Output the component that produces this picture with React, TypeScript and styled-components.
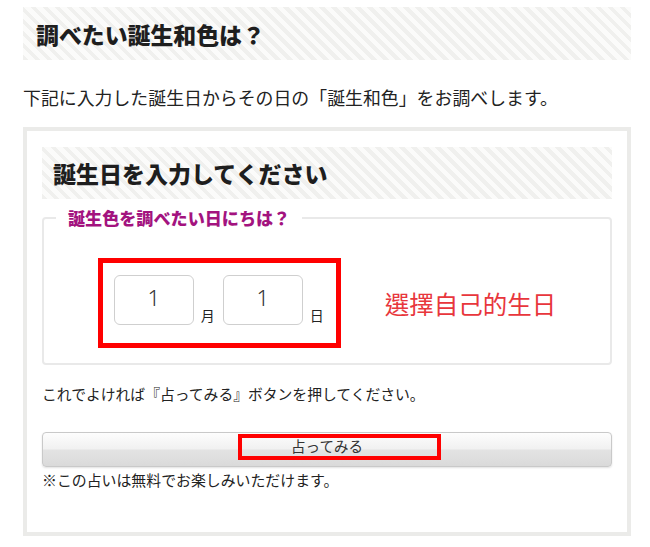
import React from "react";
import styled, { createGlobalStyle } from "styled-components";

const GlobalStyle = createGlobalStyle`
  body {
    margin: 0;
    background: #fff;
    font-family: "Noto Sans CJK JP", "Noto Sans", sans-serif;
    color: #222;
  }
`;

const stripes = `repeating-linear-gradient(45deg, #f0f0ee 0 4px, #fbfbfa 4px 8.5px)`;

const Page = styled.div`
  width: 608px;
  padding: 7px 0 0 23px;
`;

const Title = styled.h2`
  margin: 0;
  height: 53px;
  display: flex;
  align-items: center;
  padding-left: 13px;
  background: ${stripes};
  font-size: 22.9px;
  font-weight: 900;
  color: #1e1e1e;
`;

const Lead = styled.p`
  margin: 24px 0 17px;
  font-size: 17.9px;
  line-height: 26px;
  color: #222;
`;

const Box = styled.div`
  border: 4px solid #ebebe9;
  padding: 16px 15px 41px;
`;

const SubTitle = styled.h3`
  margin: 0;
  height: 52px;
  display: flex;
  align-items: center;
  padding-left: 11px;
  background: ${stripes};
  font-size: 23px;
  font-weight: 900;
  color: #1e1e1e;
`;

const Field = styled.fieldset`
  margin: 9px 0 0;
  border: 2px solid #e9e9e9;
  border-radius: 4px;
  padding: 30px 12px 15px;
  min-width: 0;
`;

const Legend = styled.legend`
  padding: 0 12px;
  font-size: 17.1px;
  line-height: 20px;
  font-weight: 800;
  color: #a3137f;
`;

const Row = styled.div`
  display: flex;
  align-items: center;
  justify-content: center;
  gap: 44px;
`;

const Marked = styled.div`
  display: flex;
  align-items: flex-end;
  border: 5px solid #f00;
  padding: 12px 12px 18px 11px;
`;

const DateInput = styled.input`
  box-sizing: border-box;
  width: 80px;
  height: 50px;
  border: 1px solid #cfcfcf;
  border-radius: 6px;
  background: #fff;
  text-align: center;
  font-family: "Noto Sans", sans-serif;
  font-size: 22px;
  font-weight: 300;
  color: #333;
  padding: 0 0 6px;
  outline: none;
`;

const Unit = styled.span<{ $last?: boolean }>`
  font-size: 14px;
  line-height: 18px;
  color: #222;
  margin: 0 ${(p) => (p.$last ? "0" : "8px")} 1px 7px;
`;

const Hint = styled.span`
  font-family: "Noto Sans CJK TC", sans-serif;
  font-size: 24.5px;
  font-weight: 400;
  color: #e8363c;
`;

const Note = styled.p<{ $top: number }>`
  margin: ${(p) => p.$top}px 0 0;
  font-size: ${(p) => (p.$top > 10 ? "14.8px" : "14.9px")};
  line-height: 22px;
  color: #222;
`;

const ButtonWrap = styled.div`
  position: relative;
  margin-top: 27px;
`;

const FortuneButton = styled.button`
  display: block;
  width: 100%;
  height: 35px;
  border: 1px solid #c9c9c9;
  border-radius: 4px;
  background: linear-gradient(#fdfdfd 0%, #f1f1f1 48%, #e3e3e3 52%, #dadada 100%);
  box-shadow: 0 1px 2px rgba(0, 0, 0, 0.12);
  font-family: "Noto Sans CJK JP", sans-serif;
  font-size: 14.5px;
  line-height: 20px;
  color: #333;
  padding: 0 0 7px;
`;

const ButtonMark = styled.span`
  position: absolute;
  left: 196px;
  top: 2px;
  width: 203px;
  height: 26px;
  box-sizing: border-box;
  border: 4px solid #f00;
  pointer-events: none;
`;

export default function App() {
  return (
    <>
      <GlobalStyle />
      <Page>
        <Title>調べたい誕生和色は？</Title>
        <Lead>下記に入力した誕生日からその日の「誕生和色」をお調べします。</Lead>
        <Box>
          <SubTitle>誕生日を入力してください</SubTitle>
          <Field>
            <Legend>誕生色を調べたい日にちは？</Legend>
            <Row>
              <Marked>
                <DateInput defaultValue="1" />
                <Unit>月</Unit>
                <DateInput defaultValue="1" />
                <Unit $last>日</Unit>
              </Marked>
              <Hint>選擇自己的生日</Hint>
            </Row>
          </Field>
          <Note $top={18}>これでよければ『占ってみる』ボタンを押してください。</Note>
          <ButtonWrap>
            <FortuneButton type="button">占ってみる</FortuneButton>
            <ButtonMark />
          </ButtonWrap>
          <Note $top={2}>※この占いは無料でお楽しみいただけます。</Note>
        </Box>
      </Page>
    </>
  );
}
